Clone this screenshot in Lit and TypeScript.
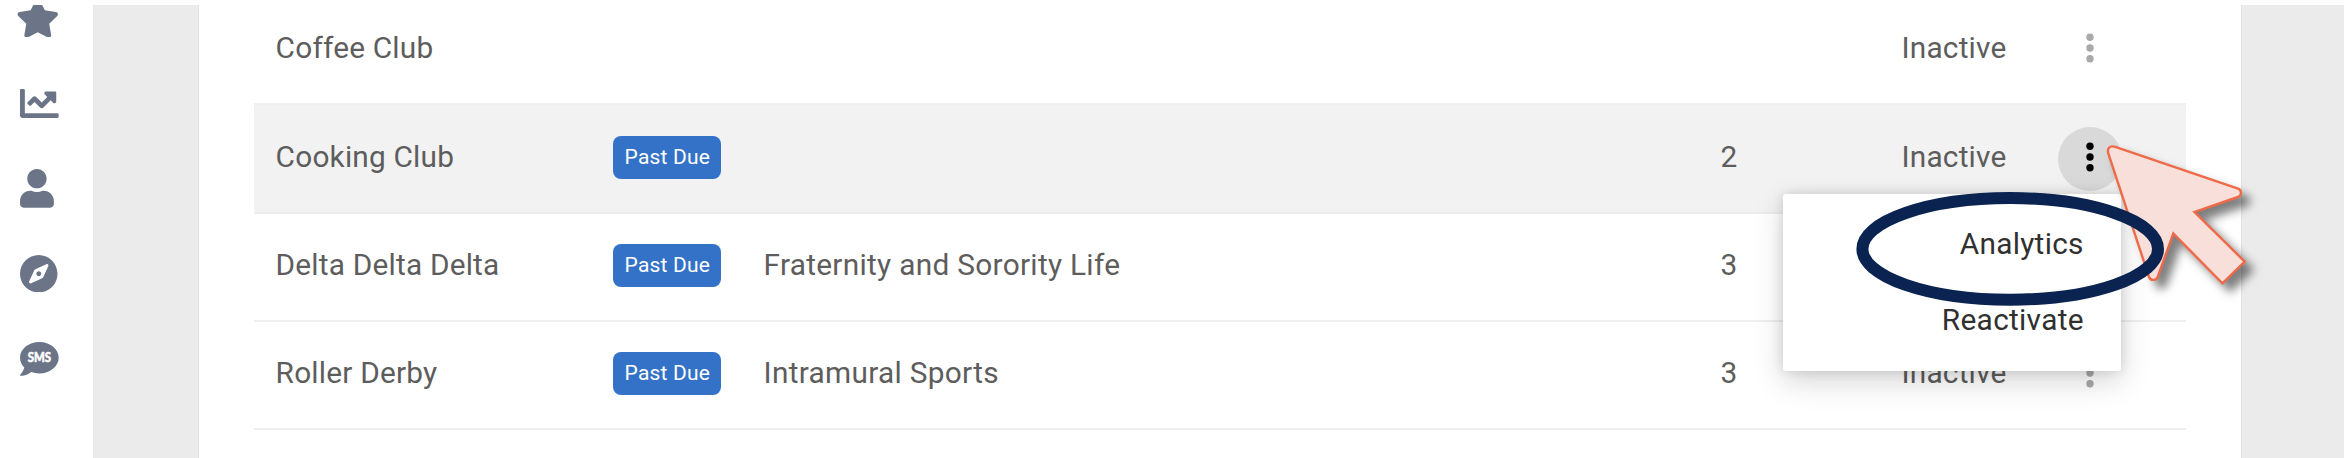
import { LitElement, html, svg, css } from "lit";
import { customElement, property } from "lit/decorators.js";

interface Club {
  name: string;
  pastDue?: boolean;
  category?: string;
  count?: string;
  active?: boolean;
  /** The row's status and actions lie wholly beneath the open menu. */
  covered?: boolean;
}

const CLUBS: Club[] = [
  { name: "Coffee Club" },
  { name: "Cooking Club", pastDue: true, count: "2", active: true },
  { name: "Delta Delta Delta", pastDue: true, category: "Fraternity and Sorority Life", count: "3", covered: true },
  { name: "Roller Derby", pastDue: true, category: "Intramural Sports", count: "3" },
  { name: "" },
];

@customElement("side-nav")
export class SideNav extends LitElement {
  static styles = css`
    :host { display: block; width: 93px; flex: none; overflow: hidden; background: #fff; }
    nav { display: flex; flex-direction: column; margin-top: -29.5px; padding-left: 20.3px; }
    .item { height: 85.2px; flex: none; display: flex; align-items: center; }
    svg { display: block; fill: #6c7588; flex: none; }
    .star { width: 43.5px; height: 38.7px; margin-left: -4.5px; }
    .chart { width: 38.7px; height: 29px; }
    .user { width: 33.9px; height: 38.7px; }
    .compass { width: 37.5px; height: 37.5px; }
    .sms { width: 38.7px; height: 33.9px; }
    .letters { fill: #fff; stroke: #fff; stroke-width: 7; letter-spacing: 0; font: 900 178px Lato, sans-serif; }
  `;
  render() {
    return html`<nav>
      <div class="item"><svg class="star" viewBox="0 0 576 512"><path d="M259.3 17.8L194 150.2 47.9 171.5c-26.2 3.8-36.7 36.1-17.7 54.6l105.7 103-25 145.5c-4.5 26.3 23.2 46 46.4 33.7L288 439.6l130.7 68.7c23.2 12.2 50.9-7.4 46.4-33.7l-25-145.5 105.7-103c19-18.5 8.5-50.8-17.7-54.6L382 150.2 316.7 17.8c-11.7-23.6-45.6-23.9-57.4 0z"/></svg></div>
      <div class="item"><svg class="chart" viewBox="0 64 512 384"><path d="M496 384H64V80c0-8.84-7.16-16-16-16H16C7.16 64 0 71.16 0 80v336c0 17.67 14.33 32 32 32h464c8.84 0 16-7.16 16-16v-32c0-8.84-7.16-16-16-16zM464 96H345.94c-21.38 0-32.09 25.85-16.97 40.97l32.4 32.4L288 242.75l-73.37-73.37c-12.5-12.5-32.76-12.5-45.25 0l-68.69 68.69c-6.25 6.25-6.25 16.38 0 22.63l22.62 22.62c6.25 6.25 16.38 6.25 22.63 0L192 237.25l73.37 73.37c12.5 12.5 32.76 12.5 45.25 0l96-96 32.4 32.4c15.12 15.12 40.97 4.41 40.97-16.97V112c.01-8.84-7.15-16-15.99-16z"/></svg></div>
      <div class="item"><svg class="user" viewBox="0 0 448 512"><path d="M224 256c70.7 0 128-57.3 128-128S294.7 0 224 0 96 57.3 96 128s57.3 128 128 128zm89.6 32h-16.7c-22.2 10.2-46.9 16-72.9 16s-50.6-5.8-72.9-16h-16.7C60.2 288 0 348.2 0 422.4V464c0 26.5 21.5 48 48 48h352c26.5 0 48-21.5 48-48v-41.6c0-74.2-60.2-134.4-134.4-134.4z"/></svg></div>
      <div class="item"><svg class="compass" viewBox="0 8 496 496"><path d="M225.38 233.37c-12.5 12.5-12.5 32.76 0 45.25 12.49 12.5 32.76 12.5 45.25 0 12.5-12.5 12.5-32.76 0-45.25-12.5-12.49-32.76-12.49-45.25 0zM248 8C111.03 8 0 119.03 0 256s111.03 248 248 248 248-111.03 248-248S384.97 8 248 8zm126.14 148.05L308.17 300.4a31.938 31.938 0 0 1-15.77 15.77l-144.34 65.97c-16.65 7.61-33.81-9.55-26.2-26.2l65.98-144.35a31.938 31.938 0 0 1 15.77-15.77l144.34-65.97c16.65-7.6 33.8 9.55 26.19 26.2z"/></svg></div>
      <div class="item"><svg class="sms" viewBox="0 32 512 448"><path d="M256 32C114.6 32 0 125.1 0 240c0 49.6 21.4 95 57 130.7C44.5 421.1 2.7 466 2.2 466.5c-2.2 2.3-2.8 5.7-1.5 8.7S4.8 480 8 480c66.3 0 116-31.8 140.6-51.4 32.7 12.3 69 19.4 107.4 19.4 141.4 0 256-93.1 256-208S397.4 32 256 32z"/><text class="letters" x="102" y="302" textLength="308" lengthAdjust="spacingAndGlyphs">SMS</text></svg></div>
    </nav>`;
  }
}

@customElement("club-row")
export class ClubRow extends LitElement {
  @property({ attribute: false }) club!: Club;

  static styles = css`
    :host { display: block; }
    .row {
      height: 108.3px; box-sizing: border-box; border-bottom: 2px solid #efefef; padding-bottom: 2.4px;
      display: grid; grid-template-columns: 359px 150.5px 773px 201px 269px 167.6px;
      align-items: center; color: #5d5d5d; white-space: nowrap;
    }
    .row.active { background: #f2f2f2; border-bottom-color: #ededed; }
    .name, .category, .count, .status { padding-bottom: 2px; }
    .name { padding-left: 21.6px; }
    .name, .status { letter-spacing: .2px; }
    .count, .status { text-align: right; }
    .badge {
      display: flex; align-items: center; justify-content: center; width: 108px; height: 43px;
      border-radius: 8px; background: #3472c7; color: #fff; font-size: 21px; letter-spacing: .2px;
    }
    .tags { padding-left: .4px; }
    .more {
      justify-self: center; width: 64px; height: 64px; border-radius: 50%; margin-top: 3px;
      display: flex; align-items: center; justify-content: center;
    }
    .active .more { background: #d9d9d9; }
    svg { display: block; width: 10px; height: 32px; fill: #a9a9a9; margin-top: -4px; }
    .active svg { fill: #000; }
  `;
  render() {
    const c = this.club;
    return html`<div class="row ${c.active ? "active" : ""}">
      <span class="name">${c.name}</span>
      <span class="tags">${c.pastDue ? html`<span class="badge">Past Due</span>` : ""}</span>
      <span class="category">${c.category ?? ""}</span>
      <span class="count">${c.count ?? ""}</span>
      ${c.name && !c.covered
        ? html`<span class="status">Inactive</span>
            <span class="more"><svg viewBox="0 0 10 32">${[5.3, 16, 26.7].map((y) => svg`<circle cx="5" cy=${y} r="3.7"/>`)}</svg></span>`
        : ""}
    </div>`;
  }
}

@customElement("app-root")
export class AppRoot extends LitElement {
  static styles = css`
    :host {
      display: block; position: relative; box-sizing: border-box; height: 458px; padding-top: 5px;
      overflow: hidden; background: #fff; font-family: Roboto, sans-serif; font-size: 29.8px;
      letter-spacing: .3px; line-height: 35px;
    }
    .shell { display: flex; height: 453px; }
    .page { flex: 1; background: #ebebeb; padding: 0 102px 0 105px; overflow: hidden; }
    .panel { height: 453px; overflow: hidden; background: #fff; border: solid #e2e2e2; border-width: 0 1px; padding: 0 55px; }
    .table { margin-top: -8px; }
    .menu {
      position: absolute; left: 1783.3px; top: 194.3px; width: 338px; height: 176.7px; box-sizing: border-box;
      padding: 11px 37.5px 13px 0; background: #fff; border-radius: 3px; color: #303030; text-align: right;
      box-shadow: 0 10px 30px rgba(0,0,0,.17), 0 0 12px rgba(0,0,0,.12);
      display: flex; flex-direction: column;
    }
    .entry { flex: 1; display: flex; align-items: center; justify-content: flex-end; }
    .marks { position: absolute; left: 0; top: 0; width: 2344px; height: 458px; pointer-events: none; }
    .pointer { fill: #f9dfd9; stroke: #ee6a48; stroke-width: 2.4; filter: drop-shadow(8px 8px 5px rgba(0,0,0,.5)); }
    .ring { fill: none; stroke: #0b2350; stroke-width: 12; }
  `;
  render() {
    return html`
      <div class="shell">
        <side-nav></side-nav>
        <div class="page">
          <div class="panel">
            <div class="table">${CLUBS.map((c) => html`<club-row .club=${c}></club-row>`)}</div>
          </div>
        </div>
      </div>
      <div class="menu">
        <div class="entry">Analytics</div>
        <div class="entry">Reactivate</div>
      </div>
      <svg class="marks" viewBox="0 0 2344 458">
        <path class="pointer" d="M2114.5 146.7L2238 188.6C2242 190 2242 195.6 2238 197L2194.5 212L2244.7 261.6L2222.4 283.4L2173.3 233.5L2158 276C2156.8 281 2150.5 281 2149 277L2108.3 153.5C2107 148.5 2109.5 145.3 2114.5 146.7Z"/>
        <ellipse class="ring" cx="2010.2" cy="248.9" rx="147.8" ry="50.8"/>
      </svg>
    `;
  }
}
